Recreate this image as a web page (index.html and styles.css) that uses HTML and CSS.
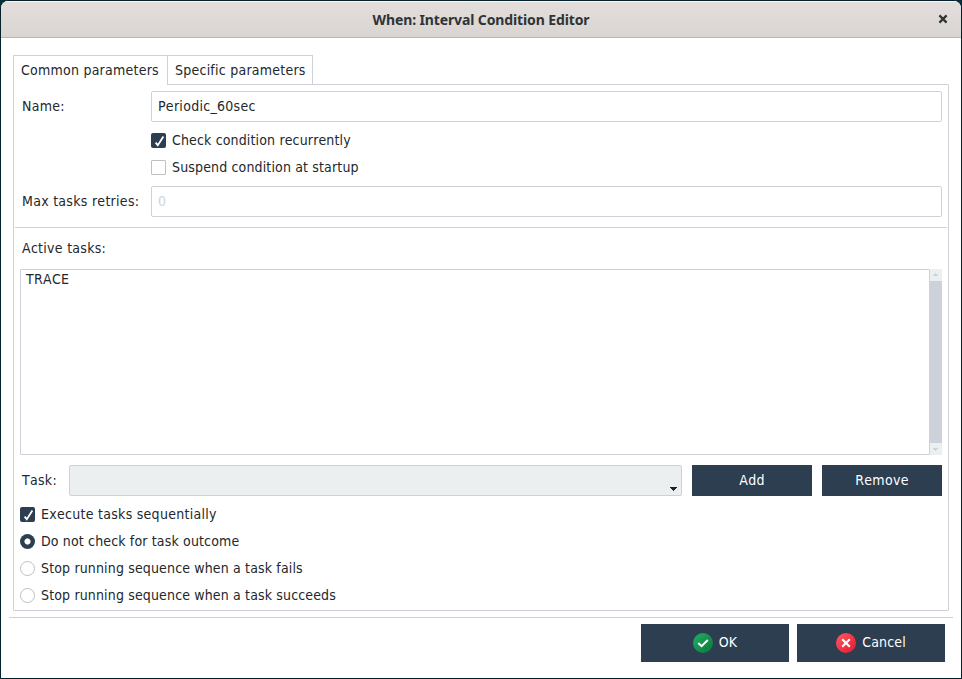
FILE: index.html
```html
<!DOCTYPE html>
<html lang="en">
<head>
<meta charset="utf-8">
<title>When: Interval Condition Editor</title>
<link rel="stylesheet" href="styles.css">
</head>
<body>
<div class="window">
  <header class="titlebar">
    <h1 class="title">When: Interval Condition Editor</h1>
    <button class="close" aria-label="Close"><svg width="10" height="10" viewBox="0 0 10 10"><path d="M1.4 1.4 8.6 8.6M8.6 1.4 1.4 8.6" stroke="#2e3436" stroke-width="2.2"/></svg></button>
  </header>
  <main class="content">
    <nav class="tabs">
      <div class="tab active"><span class="text">Common parameters</span></div>
      <div class="tab"><span class="text">Specific parameters</span></div>
    </nav>
    <section class="panel">
      <div class="form">
        <span class="text loose">Name:</span>
        <div class="input"><span class="text loose">Periodic_60sec</span></div>
        <div class="checks">
          <div class="option"><svg class="box on" viewBox="0 0 15 15"><path d="M4.6 9.6 6.8 12.2 12.4 3.6"/></svg><span class="text">Check condition recurrently</span></div>
          <div class="option"><span class="box"></span><span class="text">Suspend condition at startup</span></div>
        </div>
        <span class="text loose">Max tasks retries:</span>
        <div class="input disabled"><span class="text">0</span></div>
      </div>
      <div class="rule"></div>
      <div class="heading"><span class="text loose">Active tasks:</span></div>
      <div class="list-row">
        <div class="list"><span class="text loose">TRACE</span></div>
        <div class="scrollbar">
          <svg class="arrow" viewBox="0 0 12 12"><path d="M3 7h5v-1h-1v-1h-1v-1h-1v1h-1v1h-1z"/></svg>
          <div class="thumb"></div>
          <svg class="arrow" viewBox="0 0 12 12"><path d="M3 5h5v1h-1v1h-1v1h-1v-1h-1v-1h-1z"/></svg>
        </div>
      </div>
      <div class="task-row">
        <span class="text loose task-label">Task:</span>
        <div class="combo"><svg width="7" height="4" viewBox="0 0 7 4" shape-rendering="crispEdges"><path d="M0 0h7v1h-1v1h-1v1h-1v1h-1v-1h-1v-1h-1v-1h-1z" fill="#1d2328"/></svg></div>
        <button class="button"><span class="text loose">Add</span></button>
        <button class="button"><span class="text loose">Remove</span></button>
      </div>
      <div class="options">
        <div class="option"><svg class="box on" viewBox="0 0 15 15"><path d="M4.6 9.6 6.8 12.2 12.4 3.6"/></svg><span class="text loose">Execute tasks sequentially</span></div>
        <div class="option"><span class="radio on"></span><span class="text">Do not check for task outcome</span></div>
        <div class="option"><span class="radio"></span><span class="text">Stop running sequence when a task fails</span></div>
        <div class="option"><span class="radio"></span><span class="text">Stop running sequence when a task succeeds</span></div>
      </div>
    </section>
  </main>
  <footer class="footer">
    <button class="button wide">
      <svg width="20" height="20" viewBox="0 0 20 20"><defs><linearGradient id="green" x2="1" y2="1"><stop stop-color="#23b067"/><stop offset="1" stop-color="#087638"/></linearGradient></defs><circle cx="10" cy="10" r="10" fill="url(#green)"/><path d="M5.2 10.1 8.6 13.2 14.8 7" fill="none" stroke="#fff" stroke-width="2"/></svg>
      <span class="text">OK</span></button>
    <button class="button wide">
      <svg width="20" height="20" viewBox="0 0 20 20"><defs><linearGradient id="red" x2="1" y2="1"><stop stop-color="#ff5964"/><stop offset="1" stop-color="#e5182c"/></linearGradient></defs><circle cx="10" cy="10" r="10" fill="url(#red)"/><path d="M6.2 6.2 13.8 13.8M13.8 6.2 6.2 13.8" stroke="#fff" stroke-width="2.2"/></svg>
      <span class="text">Cancel</span></button>
  </footer>
</div>
</body>
</html>
```
FILE: styles.css
```css
* { box-sizing: border-box; }
body { margin: 0; background: #04303a; font-family: "DejaVu Sans Condensed", "DejaVu Sans", sans-serif; font-size: 14px; line-height: 16px; color: #22282c; }
button { border: 0; padding: 0; font: inherit; }
svg { display: block; flex: none; }
.text { white-space: nowrap; font-kerning: none; letter-spacing: 0.15px; }
.text.loose { letter-spacing: 0.28px; }
.tab .text { letter-spacing: 0.24px; }
.window { height: 679px; border: 1px solid #04222b; border-radius: 8px 8px 0 0; background: #fff; display: flex; flex-direction: column; overflow: hidden; }
.titlebar { height: 37px; flex: none; display: grid; grid-template-columns: 40px 1fr 40px; align-items: center; background: linear-gradient(#e3dedc, #d9d5d1); border-top: 1px solid #f8f6f6; border-bottom: 1px solid #bbb6af; }
.title { grid-column: 2; margin: 0; text-align: center; font: 700 14px/20px "Noto Sans", sans-serif; letter-spacing: -0.12px; color: #2e3436; }
.close { background: none; justify-self: end; margin: 0 13px 2px 0; }
.content { padding: 17px 12px 0; }
.tabs { display: flex; height: 29px; }
.tab { height: 29px; width: 146px; padding: 6px 0 0 7px; border: 1px solid #cdd2d9; border-bottom: 0; margin-left: -1px; }
.tab.active { width: 155px; margin-left: 0; height: 30px; background: #fff; z-index: 1; }
.panel { height: 527px; border: 1px solid #cdd2d9; border-radius: 1px; padding: 6px 6px 0; }
.form { display: grid; grid-template-columns: 131px 1fr; align-items: center; }
.form > .text { padding: 0 0 2px 2px; }
.input { height: 31px; border: 1px solid #cdd2d9; border-radius: 2px; padding: 6px 6px; }
.input.disabled .text { color: #cfd4da; }
.checks { grid-column: 2; padding: 5px 0; }
.option { height: 27px; display: flex; align-items: center; gap: 6px; padding-bottom: 2px; }
.box { width: 15px; height: 15px; border: 1px solid #bfc0c2; border-radius: 1px; margin-top: 2px; }
.box.on { background: #2c3e50; border: 0; border-radius: 2px; }
.box.on path { fill: none; stroke: #fff; stroke-width: 1.8; }
.radio { width: 15px; height: 15px; border: 1px solid #bfc0c2; border-radius: 50%; margin-top: 2px; }
.radio.on { border: 0; background: radial-gradient(circle at center, #fff 2.6px, #2c3e50 3.5px); }
.rule { height: 1px; background: #cdd2d9; margin: 10px -5px 12px; }
.heading { height: 29px; padding-left: 2px; }
.list-row { display: flex; height: 186px; }
.list { flex: 1; border: 1px solid #cdd2d9; border-radius: 1px; padding: 1px 5px; }
.scrollbar { width: 12px; display: flex; flex-direction: column; background: #ebefef; }
.arrow { width: 12px; height: 12px; fill: #cdd2d9; }
.thumb { flex: 1; background: #cdd2da; margin-left: -1px; }
.task-row { display: flex; gap: 10px; margin-top: 10px; align-items: center; height: 31px; }
.task-label { width: 39px; padding: 0 0 2px 2px; }
.combo { flex: 1; height: 31px; border: 1px solid #cdd2d9; border-radius: 2px; background: #ebefef; display: flex; justify-content: flex-end; align-items: flex-end; padding: 0 4px 4px; }
.button { width: 120px; height: 31px; background: #2c3e50; color: #fff; display: flex; align-items: center; justify-content: center; gap: 6px; }
.button .text { padding-bottom: 2px; }
.options { padding-top: 5px; }
.footer { margin: 6px 8px 0; height: 45px; border-top: 1px solid #cdd2d9; padding: 6px 8px 0; display: flex; justify-content: flex-end; gap: 8px; }
.button.wide { width: 148px; height: 38px; }
```
